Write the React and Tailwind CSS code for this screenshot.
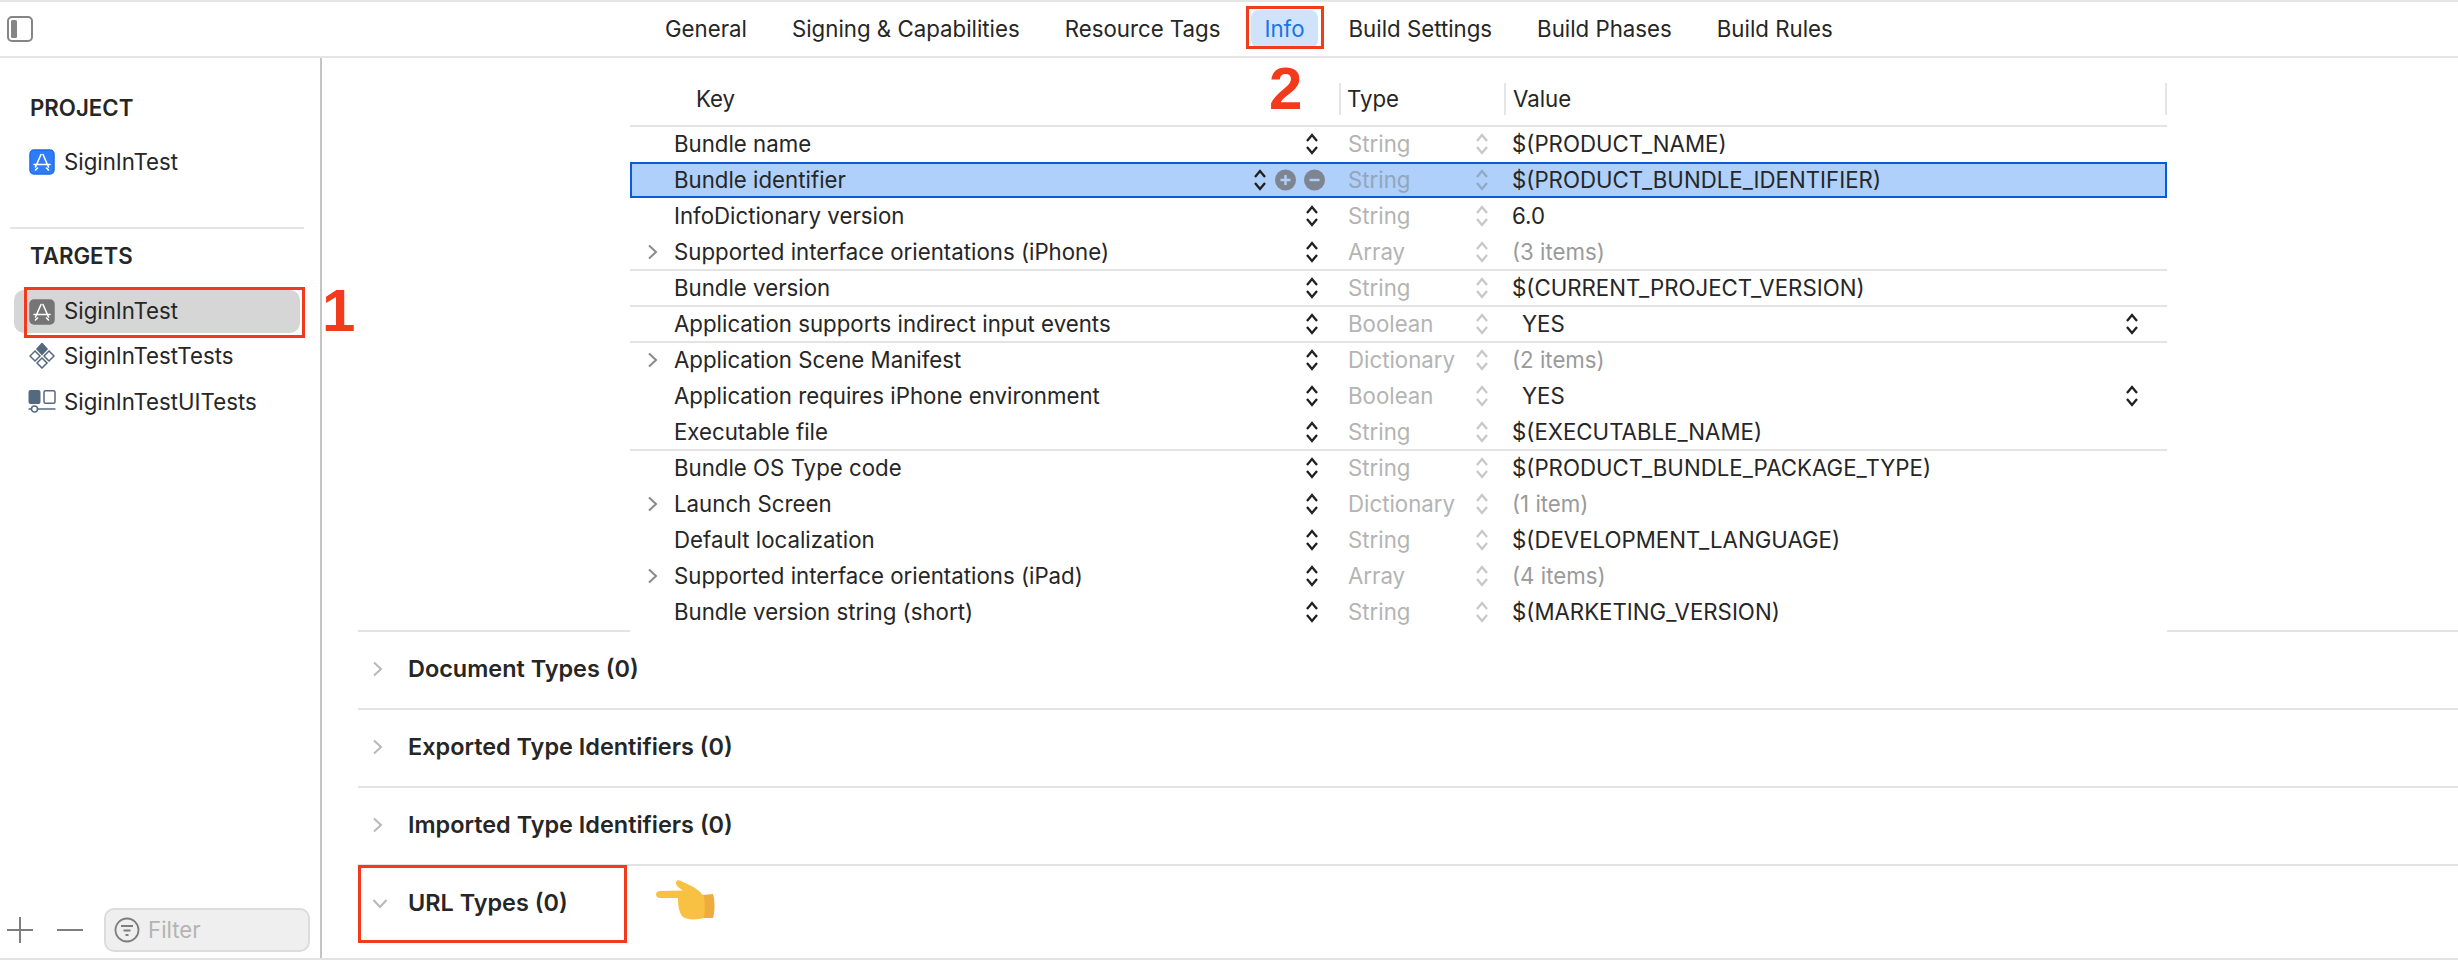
const sans = 'font-["Inter",sans-serif]'

const rows = [
  { key: 'Bundle name', type: 'String', value: '$(PRODUCT_NAME)' },
  { key: 'Bundle identifier', type: 'String', value: '$(PRODUCT_BUNDLE_IDENTIFIER)', selected: true },
  { key: 'InfoDictionary version', type: 'String', value: '6.0' },
  { key: 'Supported interface orientations (iPhone)', type: 'Array', value: '(3 items)', expand: true, muted: true, line: true },
  { key: 'Bundle version', type: 'String', value: '$(CURRENT_PROJECT_VERSION)', line: true },
  { key: 'Application supports indirect input events', type: 'Boolean', value: 'YES', bool: true, line: true },
  { key: 'Application Scene Manifest', type: 'Dictionary', value: '(2 items)', expand: true, muted: true },
  { key: 'Application requires iPhone environment', type: 'Boolean', value: 'YES', bool: true },
  { key: 'Executable file', type: 'String', value: '$(EXECUTABLE_NAME)', line: true },
  { key: 'Bundle OS Type code', type: 'String', value: '$(PRODUCT_BUNDLE_PACKAGE_TYPE)' },
  { key: 'Launch Screen', type: 'Dictionary', value: '(1 item)', expand: true, muted: true },
  { key: 'Default localization', type: 'String', value: '$(DEVELOPMENT_LANGUAGE)' },
  { key: 'Supported interface orientations (iPad)', type: 'Array', value: '(4 items)', expand: true, muted: true },
  { key: 'Bundle version string (short)', type: 'String', value: '$(MARKETING_VERSION)' },
]

const tabs = ['General', 'Signing & Capabilities', 'Resource Tags', 'Info', 'Build Settings', 'Build Phases', 'Build Rules']

function Stepper({ className = 'text-[#1f1f1f]' }) {
  return (
    <svg width="14" height="22" viewBox="0 0 14 22" fill="none" stroke="currentColor" strokeWidth="2.3" className={className}>
      <path d="M2 8 L7 2 L12 8" />
      <path d="M2 14 L7 20 L12 14" />
    </svg>
  )
}

function Chevron({ className = 'text-[#8a8a8a]' }) {
  return (
    <svg width="11" height="16" viewBox="0 0 11 16" fill="none" stroke="currentColor" strokeWidth="2" className={className}>
      <path d="M2 1.5 L9 8 L2 14.5" />
    </svg>
  )
}

function AppIcon({ bg, ring }) {
  return (
    <svg width="26" height="26" viewBox="0 0 26 26" fill="none">
      <rect x="1" y="1" width="24" height="24" rx="4" fill={bg} stroke={ring} strokeWidth="1.5" />
      <path d="M14 5.5 L19.5 18 M12 5.5 L6.5 18 M5 15.5 L21 15.5 M8.5 19 L6.5 21 M17.5 19 L19.5 21" stroke="white" strokeWidth="1.6" strokeLinecap="round" />
    </svg>
  )
}

function TestsIcon() {
  return (
    <svg width="26" height="26" viewBox="0 0 26 26" fill="none" stroke="#54697f" strokeWidth="1.5">
      <path d="M13 0.5 L18 6 L13 11.5 L8 6 Z" fill="#54697f" />
      <path d="M6 8 L11 13 L6 18 L1 13 Z" />
      <path d="M20 8 L25 13 L20 18 L15 13 Z" />
      <path d="M13 15 L18 20 L13 25 L8 20 Z" />
    </svg>
  )
}

function UiTestsIcon() {
  return (
    <svg width="28" height="26" viewBox="0 0 28 26" fill="none">
      <rect x="0.5" y="1" width="12" height="14" rx="2" fill="#54697f" />
      <rect x="16" y="1.8" width="11" height="12.5" rx="1.5" stroke="#54697f" strokeWidth="1.5" />
      <path d="M8 20 H27.5 M0.5 20 H3" stroke="#54697f" strokeWidth="1.5" />
      <circle cx="6.5" cy="20" r="3" fill="white" stroke="#54697f" strokeWidth="1.5" />
    </svg>
  )
}

function Hand() {
  return (
    <svg width="62" height="42" viewBox="0 0 62 42">
      <path d="M48 16 L58 15 C60 22 60 32 58 39 L47 39 Z" fill="#eeac3c" />
      <path
        d="M1 15.5 C1 13 3 12 5 12 L28 11.5 C24 9 20 6 21 3 C22 1 24 1 26 2 C32 5 40 8 45 13 L49 17 C50 24 50 32 49 39 C42 41 32 41 28 38 C24 34 23 27 23 19 L5 19 C3 19 1 18 1 15.5 Z"
        fill="#f9c144"
      />
    </svg>
  )
}

function Row({ row }) {
  const { key: name, type, value, selected, expand, muted, line, bool } = row
  return (
    <div
      className={`flex items-center h-9 ${
        selected
          ? 'relative -top-px bg-[#aed0fa] border-2 border-[#0a5bd8]'
          : line
            ? 'border-b-2 border-[#e3e3e3]'
            : 'border-b-2 border-transparent'
      }`}
    >
      <div className={`flex items-center h-full shrink-0 ${selected ? 'w-[707px]' : 'w-[709px]'}`}>
        <div className={`flex justify-center shrink-0 ${selected ? 'w-[42px]' : 'w-[44px]'}`}>
          {expand && <Chevron />}
        </div>
        <span className="text-[#262626]">{name}</span>
        <div className="ml-auto flex items-center">
          {selected ? (
            <>
              <Stepper />
              <svg width="51" height="22" viewBox="0 0 51 22" className="ml-[8px] shrink-0">
                <circle cx="10.5" cy="11" r="10.5" fill="#7f8590" />
                <path d="M10.5 6 V16 M5.5 11 H15.5" stroke="#aed0fa" strokeWidth="2.4" />
                <circle cx="39.5" cy="11" r="10.5" fill="#7f8590" />
                <path d="M34.5 11 H44.5" stroke="#aed0fa" strokeWidth="2.4" />
              </svg>
              <span className="w-[13px] shrink-0" />
            </>
          ) : (
            <>
              <Stepper />
              <span className="w-[20px] shrink-0" />
            </>
          )}
        </div>
      </div>
      <div className="flex items-center justify-between w-[165px] shrink-0 pl-[9px] pr-[15px]">
        <span className={selected ? 'text-[#94a5ba]' : 'text-[#b4b4b4]'}>{type}</span>
        <Stepper className={selected ? 'text-[#94a9c6]' : 'text-[#c8c8c8]'} />
      </div>
      <div className={`flex-1 flex items-center justify-between ${bool ? 'pl-[18px]' : 'pl-[8px]'} pr-[28px]`}>
        <span className={muted ? 'text-[#9a9a9a]' : 'text-[#262626]'}>{value}</span>
        {bool && <Stepper />}
      </div>
    </div>
  )
}

function Section({ title, open }) {
  return (
    <div className="flex items-center h-[76px] pl-[14px] pb-[2px]">
      <div className="w-[36px] flex shrink-0">
        {open ? (
          <svg width="16" height="11" viewBox="0 0 16 11" fill="none" stroke="#b8b8b8" strokeWidth="2">
            <path d="M1.5 2 L8 9 L14.5 2" />
          </svg>
        ) : (
          <Chevron className="text-[#b8b8b8]" />
        )}
      </div>
      <span className="font-semibold text-[23.45px] text-[#262626]">{title}</span>
    </div>
  )
}

export default function App() {
  return (
    <div className={`${sans} relative w-[2458px] h-[966px] overflow-hidden bg-white text-[22.25px] leading-none flex flex-col`}>
      <div className="h-[2px] bg-[#e5e5e5]" />

      {/* toolbar */}
      <div className="relative h-[56px] shrink-0 border-b-2 border-[#e5e5e5] flex items-center">
        <svg width="28" height="28" viewBox="0 0 28 28" fill="none" className="ml-[6px] shrink-0">
          <rect x="2" y="2" width="24" height="24" rx="4" stroke="#858585" strokeWidth="2" />
          <rect x="5" y="5" width="6" height="18" rx="1.5" fill="#858585" />
        </svg>
        <div className="ml-[608.5px] flex items-center">
          {tabs.map((tab) => (
            <div
              key={tab}
              className={`flex items-center h-[38px] rounded-[8px] ${
                tab === 'Info' ? 'bg-[#cfe3fd] text-[#1a73e8] px-[13px] mx-[8.5px]' : 'text-[#262626] mx-[22.5px]'
              }`}
            >
              {tab}
            </div>
          ))}
        </div>
      </div>

      <div className="flex h-[900px] shrink-0">
        {/* sidebar */}
        <aside className="w-[320px] shrink-0 flex flex-col">
          <div className="pl-[30px] pt-[39px] h-[80px] font-semibold text-[#262626]">PROJECT</div>
          <div className="flex items-center h-[48px] pl-[29px] gap-[9px] text-[#262626]">
            <AppIcon bg="#2f7df6" ring="#1d6cea" />
            <span>SiginInTest</span>
          </div>
          <div className="mt-[41px] ml-[10px] w-[294px] h-[2px] bg-[#e5e5e5]" />
          <div className="pl-[30px] pt-[16px] h-[61px] font-semibold text-[#262626]">TARGETS</div>
          <div className="flex items-center h-[43px] mx-[14px] pl-[15px] gap-[9px] rounded-[10px] bg-[#d6d6d6] w-[286px] text-[#262626]">
            <AppIcon bg="#757575" ring="#757575" />
            <span>SiginInTest</span>
          </div>
          <div className="flex items-center h-[46px] pl-[29px] gap-[9px] text-[#262626]">
            <TestsIcon />
            <span>SiginInTestTests</span>
          </div>
          <div className="flex items-center h-[46px] pl-[28px] gap-[8px] text-[#262626]">
            <UiTestsIcon />
            <span>SiginInTestUITests</span>
          </div>
          <div className="mt-auto mb-[6px] flex items-center h-[44px]">
            <svg width="28" height="28" viewBox="0 0 28 28" stroke="#7d7d7d" strokeWidth="2" className="ml-[6px] shrink-0">
              <path d="M14 1 V27 M1 14 H27" />
            </svg>
            <svg width="28" height="4" viewBox="0 0 28 4" stroke="#7d7d7d" strokeWidth="2" className="ml-[22px] shrink-0">
              <path d="M1 2 H27" />
            </svg>
            <div className="ml-[20px] w-[206px] h-[44px] rounded-[10px] border-2 border-[#dcdcdc] bg-[#efefef] flex items-center pl-[8px] gap-[8px] text-[#b4b4b4]">
              <svg width="26" height="26" viewBox="0 0 26 26" fill="none" stroke="#7d7d7d" strokeWidth="1.8" className="shrink-0">
                <circle cx="13" cy="13" r="11.5" />
                <path d="M7 9 H19 M9.5 13.5 H16.5 M11.5 18 H14.5" />
              </svg>
              <span>Filter</span>
            </div>
          </div>
        </aside>
        <div className="w-[2px] shrink-0 bg-[#c4c4c4]" />

        {/* info table */}
        <main className="flex-1 flex flex-col">
          <div className="ml-[308px] w-[1537px] h-[69px] flex items-end pb-[10px] border-b-2 border-[#e3e3e3] text-[#262626]">
            <div className="w-[709px] pl-[66px] h-[32px] flex items-center">Key</div>
            <div className="w-[165px] h-[32px] flex items-center pl-[6px] border-l-2 border-[#e5e5e5]">Type</div>
            <div className="flex-1 h-[32px] flex items-center pl-[7px] border-l-2 border-r-2 border-[#e5e5e5]">Value</div>
          </div>
          <div className="ml-[308px] w-[1537px]">
            {rows.map((row) => (
              <Row key={row.key} row={row} />
            ))}
          </div>
          <div className="ml-[36px] -mt-px flex h-[2px] shrink-0">
            <div className="w-[272px] bg-[#e3e3e3]" />
            <div className="w-[1537px]" />
            <div className="flex-1 bg-[#e3e3e3]" />
          </div>
          <div className="ml-[36px] flex flex-col">
            <Section title="Document Types (0)" />
            <div className="h-[2px] bg-[#e3e3e3]" />
            <Section title="Exported Type Identifiers (0)" />
            <div className="h-[2px] bg-[#e3e3e3]" />
            <Section title="Imported Type Identifiers (0)" />
            <div className="h-[2px] bg-[#e3e3e3]" />
            <Section title="URL Types (0)" open />
          </div>
        </main>
      </div>
      <div className="h-[2px] bg-[#e3e3e3]" />

      {/* annotations */}
      <div className="absolute left-[1246px] top-[6px] w-[78px] h-[43px] border-[3px] border-[#f23a1d]" />
      <div className="absolute left-[24px] top-[287px] w-[281px] h-[51px] border-[3px] border-[#f23a1d]" />
      <div className="absolute left-[358px] top-[865px] w-[269px] h-[78px] border-[3px] border-[#f23a1d]" />
      <div className='absolute left-[322px] top-[281px] font-["Liberation_Sans",sans-serif] font-bold text-[60px] leading-[60px] text-[#f23a1d]'>1</div>
      <div className='absolute left-[1269px] top-[59px] font-["Liberation_Sans",sans-serif] font-bold text-[60px] leading-[60px] text-[#f23a1d]'>2</div>
      <div className="absolute left-[655px] top-[879px]">
        <Hand />
      </div>
    </div>
  )
}
